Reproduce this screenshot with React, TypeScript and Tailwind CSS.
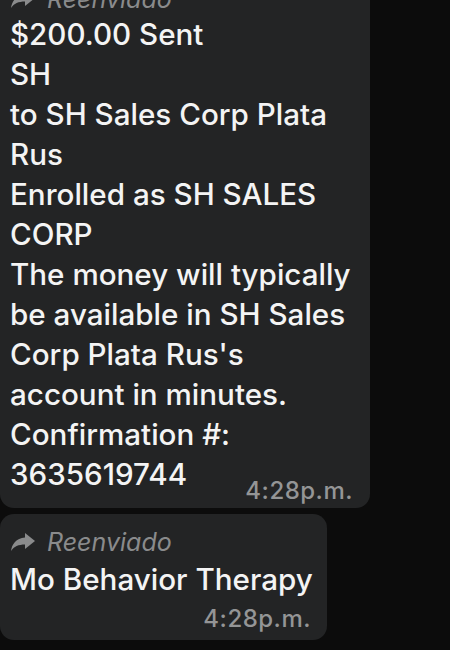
import React from "react";

const font = { fontFamily: "Inter, 'Noto Sans', sans-serif" };

function ForwardIcon() {
    return (
        <svg width="26" height="18" viewBox="0 0 26 18" className="shrink-0">
            <path d="M15 0 L25 8 L15 16 V11.5 C8.5 11.5 4 13.5 1 18 C2 11 6 5.5 15 4.5 Z" fill="#8a8b8c" />
        </svg>
    );
}

function Forwarded() {
    return (
        <div className="flex h-[30px] items-center gap-[11px] pl-[10px]">
            <ForwardIcon />
            <span className="text-[25px] italic leading-none text-[#8a8b8c]">Reenviado</span>
        </div>
    );
}

function Time({ className = "" }: { className?: string }) {
    return <span className={`text-[24px] font-medium leading-[26px] tracking-[0.5px] text-[#949596] ${className}`}>4:28p.m.</span>;
}

export default function App() {
    const lines = [
        "$200.00 Sent",
        "SH",
        "to SH Sales Corp Plata",
        "Rus",
        "Enrolled as SH SALES",
        "CORP",
        "The money will typically",
        "be available in SH Sales",
        "Corp Plata Rus's",
        "account in minutes.",
        "Confirmation #:",
    ];

    return (
        <div className="h-[650px] w-[450px] overflow-hidden bg-[#0c0c0c]" style={font}>
            <div className="mt-[-29px] flex flex-col gap-[6px]">
                <div className="w-[370px] rounded-[14px] bg-[#232425] pt-[13px] pb-[4px]">
                    <Forwarded />
                    <div className="px-[10px] text-[29.6px] font-medium leading-[40px] text-[#f4f4f4]">
                        {lines.map(l => (
                            <div key={l}>{l}</div>
                        ))}
                        <div className="flex items-start justify-between pr-[7px]">
                            <span>3635619744</span>
                            <Time className="mt-[24px]" />
                        </div>
                    </div>
                </div>

                <div className="w-[327px] rounded-[14px] bg-[#232425] pt-[13px] pb-[8px]">
                    <Forwarded />
                    <div className="mt-[2px] px-[10px] text-[29.6px] font-medium leading-[40px] text-[#f4f4f4]">Mo Behavior Therapy</div>
                    <div className="mt-[7px] flex justify-end pr-[16px]">
                        <Time />
                    </div>
                </div>
            </div>
        </div>
    );
}
